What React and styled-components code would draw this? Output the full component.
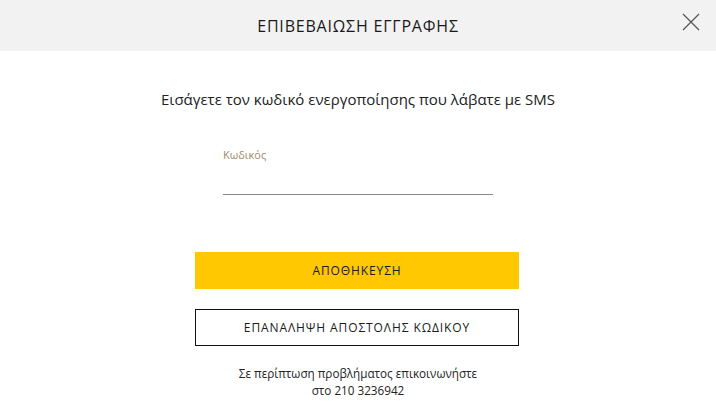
import React from "react";
import styled, { createGlobalStyle } from "styled-components";

const Global = createGlobalStyle`
  html, body { margin: 0; padding: 0; background: #fff; }
  body { font-family: "Open Sans", "Noto Sans", sans-serif; color: #222; }
`;

const Modal = styled.div`
  width: 716px;
  height: 420px;
  display: flex;
  flex-direction: column;
  background: #fff;
`;

const Header = styled.header`
  height: 51px;
  background: #f2f2f2;
  display: flex;
  align-items: center;
  justify-content: center;
  position: relative;
`;

const Title = styled.h1`
  margin: 0;
  font-size: 16px;
  font-weight: 400;
  letter-spacing: 0.8px;
  color: #1a1a1a;
`;

const Close = styled.button`
  position: absolute;
  right: 16px;
  top: 13px;
  width: 18px;
  height: 18px;
  padding: 0;
  border: 0;
  background: none;
  display: flex;
`;

const Body = styled.main`
  display: flex;
  flex-direction: column;
  align-items: center;
  padding-top: 37px;
`;

const Lead = styled.p`
  margin: 0;
  font-size: 15px;
  line-height: 22px;
  color: #222;
`;

const Field = styled.label`
  width: 270px;
  margin-top: 37px;
  display: flex;
  flex-direction: column;
`;

const Label = styled.span`
  font-size: 11px;
  color: #a08a6a;
`;

const Input = styled.input`
  margin-top: 10px;
  height: 22px;
  border: 0;
  border-bottom: 1px solid #888;
  outline: none;
  padding: 0;
  background: transparent;
`;

const Button = styled.button`
  width: 324px;
  height: 37px;
  box-sizing: border-box;
  font-family: "Open Sans", sans-serif;
  font-size: 12px;
  letter-spacing: 0.9px;
  color: #1a1a1a;
  background: ${(p) => (p.$primary ? "#ffc800" : "#fff")};
  border: ${(p) => (p.$primary ? "0" : "1px solid #111")};
  margin: ${(p) => p.$mt}px 2px 0 0;
  padding: 0;
`;

const Note = styled.p`
  margin: 19px 0 0;
  font-size: 11.7px;
  line-height: 17px;
  text-align: center;
  color: #222;
`;

export default function App() {
  return (
    <Modal>
      <Global />
      <Header>
        <Title>ΕΠΙΒΕΒΑΙΩΣΗ ΕΓΓΡΑΦΗΣ</Title>
        <Close aria-label="close">
          <svg width="18" height="18" viewBox="0 0 18 18">
            <path d="M1 1 L17 17 M17 1 L1 17" stroke="#555" strokeWidth="1.2" fill="none" />
          </svg>
        </Close>
      </Header>
      <Body>
        <Lead>Εισάγετε τον κωδικό ενεργοποίησης που λάβατε με SMS</Lead>
        <Field>
          <Label>Κωδικός</Label>
          <Input />
        </Field>
        <Button $primary $mt={57}>ΑΠΟΘΗΚΕΥΣΗ</Button>
        <Button $mt={20}>ΕΠΑΝΑΛΗΨΗ ΑΠΟΣΤΟΛΗΣ ΚΩΔΙΚΟΥ</Button>
        <Note>
          Σε περίπτωση προβλήματος επικοινωνήστε
          <br />
          στο 210 3236942
        </Note>
      </Body>
    </Modal>
  );
}
